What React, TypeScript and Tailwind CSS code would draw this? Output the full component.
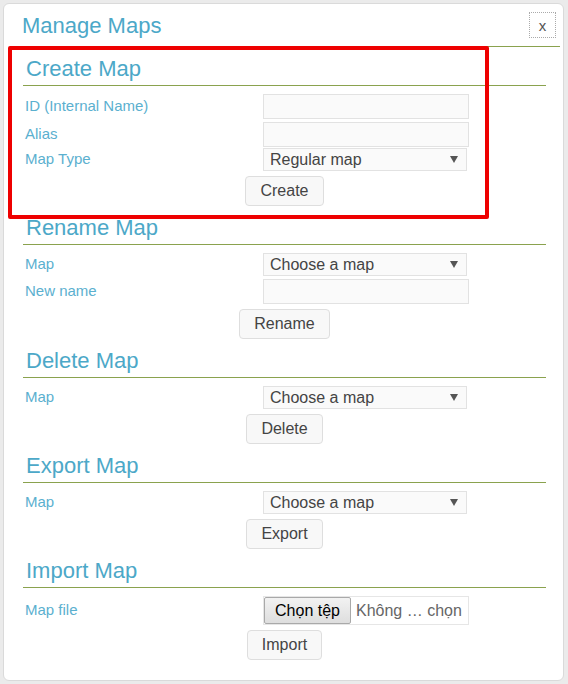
import React from 'react';

const heading = 'text-[22px] leading-[24px] text-[#4ca8c8] pl-[3px] pb-[4px] border-b border-[#8aa24e]';
const label = 'w-[240px] pl-[2px] text-[15px] text-[#5bb0cf]';
const inputCls = 'w-[206px] h-[25px] border border-[#e2e2e2] bg-[#fafafa]';
const btn = 'h-[30px] px-[14px] rounded-[4px] border border-[#dedede] bg-[#f8f8f8] text-[16px] text-[#444]';

const Select = ({ value }: { value: string }) => (
  <div className="w-[204px] h-[23px] border border-[#e2e2e2] bg-[#fafafa] flex items-center justify-between pl-[6px] pr-[8px] text-[16px] text-[#444]">
    <span>{value}</span>
    <svg width="8" height="7" viewBox="0 0 8 7">
      <path d="M0 0 L8 0 L4 7 Z" fill="#555" />
    </svg>
  </div>
);

const Row = ({ name, children, className = '' }: { name: string; children: React.ReactNode; className?: string }) => (
  <div className={`flex items-center ${className}`}>
    <div className={label}>{name}</div>
    {children}
  </div>
);

const Section = ({ title, children }: { title: string; children: React.ReactNode }) => (
  <div className="mt-[10px]">
    <div className={heading}>{title}</div>
    <div className="mt-[8px] flex flex-col">{children}</div>
  </div>
);

const Btn = ({ text }: { text: string }) => (
  <div className="mt-[5px] flex justify-center">
    <button className={btn}>{text}</button>
  </div>
);

export default function App() {
  return (
    <div className="w-[568px] h-[684px] bg-[#ebebeb] pt-[3px] pl-[3px]" style={{ fontFamily: '"Liberation Sans", Arial, sans-serif' }}>
      <div className="relative w-[561px] h-[678px] bg-white rounded-[6px] border border-[#dadada]">
        <div className="ml-[6px] mr-[3px] pt-[8px] pb-[8px] flex items-start justify-between border-b border-[#8aa24e]">
          <div className="mt-[2px] pl-[12px] text-[22px] leading-[24px] text-[#4ca8c8]">Manage Maps</div>
          <button className="mr-[4px] w-[27px] h-[26px] border border-dotted border-[#aaa] text-[15px] text-[#555] leading-none flex items-center justify-center">x</button>
        </div>

        <div className="ml-[19px] w-[523px]">
          <Section title="Create Map">
            <Row name="ID (Internal Name)"><div className={inputCls} /></Row>
            <Row name="Alias" className="mt-[3px]"><div className={inputCls} /></Row>
            <Row name="Map Type" className="mt-[1px]"><Select value="Regular map" /></Row>
            <Btn text="Create" />
          </Section>

          <Section title="Rename Map">
            <Row name="Map"><Select value="Choose a map" /></Row>
            <Row name="New name" className="mt-[3px]"><div className={inputCls} /></Row>
            <Btn text="Rename" />
          </Section>

          <Section title="Delete Map">
            <Row name="Map"><Select value="Choose a map" /></Row>
            <Btn text="Delete" />
          </Section>

          <Section title="Export Map">
            <Row name="Map"><Select value="Choose a map" /></Row>
            <Btn text="Export" />
          </Section>

          <Section title="Import Map">
            <Row name="Map file">
              <div className="w-[206px] h-[29px] border border-[#e6e6e6] flex items-center overflow-hidden whitespace-nowrap">
                <button className="h-[27px] w-[87px] border border-[#a9a9a9] rounded-[2px] bg-gradient-to-b from-[#f2f2f2] to-[#dedede] text-[16px] text-black shrink-0">Chọn tệp</button>
                <span className="ml-[5px] text-[16px] text-[#666]">Không … chọn</span>
              </div>
            </Row>
            <Btn text="Import" />
          </Section>
        </div>

        <div className="absolute left-[4px] top-[42px] w-[481px] h-[173px] border-[4px] border-[#ee0000] rounded-[2px] pointer-events-none" />
      </div>
    </div>
  );
}
